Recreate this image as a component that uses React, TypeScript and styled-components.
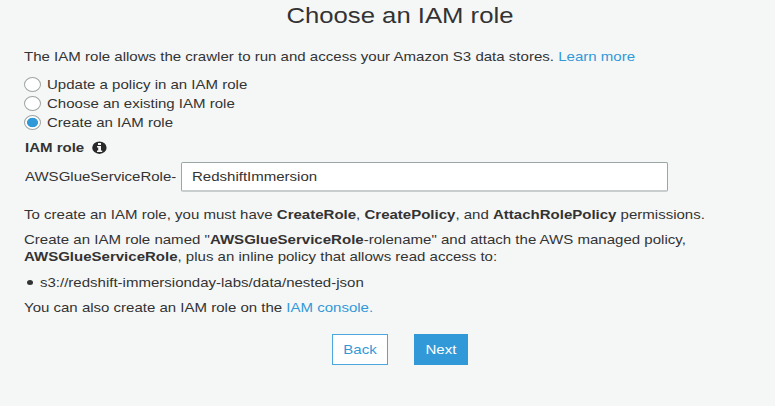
import React, { useState } from "react";
import styled, { createGlobalStyle } from "styled-components";

const GlobalStyle = createGlobalStyle`
  * { box-sizing: border-box; }
  html, body { margin: 0; background: #f5f7f7; }
  body {
    font-family: "Liberation Sans", Arial, sans-serif;
    font-size: 13.5px;
    line-height: 17px;
    color: #333;
    overflow: hidden;
  }
`;

const Page = styled.main`
  display: flex;
  flex-direction: column;
  height: 406px;
  padding: 2px 24px 0;
  background: #f5f7f7;
`;

const Wide = styled.span<{ $stretch?: number; $center?: boolean }>`
  display: inline-block;
  white-space: nowrap;
  transform: scaleX(${(p) => p.$stretch ?? 1.112});
  transform-origin: ${(p) => (p.$center ? "center" : "left")} center;
`;

const Title = styled.h1`
  margin: 0 0 18px;
  padding-left: 24px;
  height: 28px;
  line-height: 28px;
  font-size: 22.4px;
  font-weight: 400;
  text-align: center;
`;

const Paragraph = styled.p<{ $gap?: number }>`
  display: flex;
  flex-direction: column;
  align-items: flex-start;
  margin: 0 0 ${(p) => p.$gap ?? 8}px;
`;

const Link = styled.a`
  color: #3299d9;
  text-decoration: none;
`;

const Options = styled.div`
  display: flex;
  flex-direction: column;
  margin: 10px 0 7px;
`;

const Option = styled.label`
  display: flex;
  align-items: center;
  gap: 6px;
  height: 19px;
`;

const Radio = styled.input`
  appearance: none;
  flex: none;
  width: 17px;
  height: 15px;
  margin: 0;
  border: 1px solid #9fa3a3;
  border-radius: 50%;
  background: #fff;
  &:checked {
    background: radial-gradient(ellipse 5.8px 5.1px at center, #3299d9 88%, #fff 100%);
  }
`;

const FieldLabel = styled.div`
  display: flex;
  align-items: center;
  height: 17px;
  margin-bottom: 6px;
  padding-left: 1px;
  font-weight: 700;
`;

const LabelText = styled.span`
  width: 67px;
`;

const Field = styled.div`
  display: flex;
  align-items: center;
  height: 30px;
  margin-bottom: 14px;
  padding-left: 1px;
`;

const Prefix = styled.span`
  width: 156px;
  padding-bottom: 2px;
`;

const InputBox = styled.div`
  display: flex;
  align-items: center;
  width: 487px;
  height: 30px;
  padding-left: 10px;
  border: 1px solid #9ba7a7;
  border-bottom: 2px solid #c8cece;
  border-radius: 2px;
  background: #fff;
`;

const List = styled.ul`
  margin: 1px 0 8px;
  padding: 0;
  list-style: none;
`;

const Item = styled.li`
  display: flex;
  align-items: center;
  gap: 7px;
  padding-left: 3px;
  &::before {
    content: "";
    width: 6px;
    height: 5px;
    border-radius: 50%;
    background: #333;
  }
`;

const Actions = styled.div`
  display: flex;
  gap: 26px;
  margin-top: 10px;
  padding-left: 308px;
`;

const Button = styled.button<{ $primary?: boolean }>`
  width: ${(p) => (p.$primary ? 54 : 56)}px;
  height: 31px;
  padding: 0;
  border: 1px solid ${(p) => (p.$primary ? "#3299d9" : "#4ba7de")};
  background: ${(p) => (p.$primary ? "#3299d9" : "#fff")};
  color: ${(p) => (p.$primary ? "#fff" : "#3299d9")};
  font: inherit;
`;

const InfoIcon = () => (
  <svg width="15" height="13" viewBox="0 0 15 13" aria-label="Info">
    <ellipse cx="7.4" cy="6.7" rx="7.2" ry="6.2" fill="#292929" />
    <path d="M6 2h3v2H6zM5 5.1h4v4.3h1.2V11H5V9.4h1.2V6.6H5z" fill="#f5f7f7" />
  </svg>
);

const choices = [
  "Update a policy in an IAM role",
  "Choose an existing IAM role",
  "Create an IAM role",
];

export default function App() {
  const [selected, setSelected] = useState(2);
  return (
    <>
      <GlobalStyle />
      <Page>
        <Title>
          <Wide $center $stretch={1.147}>Choose an IAM role</Wide>
        </Title>
        <Paragraph $gap={0}>
          <Wide $stretch={1.114}>
            The IAM role allows the crawler to run and access your Amazon S3 data stores.{" "}
            <Link>Learn more</Link>
          </Wide>
        </Paragraph>
        <Options>
          {choices.map((text, i) => (
            <Option key={text}>
              <Radio type="radio" name="role" checked={selected === i} onChange={() => setSelected(i)} />
              <Wide>{text}</Wide>
            </Option>
          ))}
        </Options>
        <FieldLabel>
          <LabelText>
            <Wide>IAM role</Wide>
          </LabelText>
          <InfoIcon />
        </FieldLabel>
        <Field>
          <Prefix>
            <Wide>AWSGlueServiceRole-</Wide>
          </Prefix>
          <InputBox>
            <Wide>RedshiftImmersion</Wide>
          </InputBox>
        </Field>
        <Paragraph>
          <Wide>
            To create an IAM role, you must have <b>CreateRole</b>, <b>CreatePolicy</b>, and{" "}
            <b>AttachRolePolicy</b> permissions.
          </Wide>
        </Paragraph>
        <Paragraph>
          <Wide $stretch={1.114}>
            Create an IAM role named "<b>AWSGlueServiceRole</b>-rolename" and attach the AWS managed policy,
          </Wide>
          <Wide>
            <b>AWSGlueServiceRole</b>, plus an inline policy that allows read access to:
          </Wide>
        </Paragraph>
        <List>
          <Item>
            <Wide>s3://redshift-immersionday-labs/data/nested-json</Wide>
          </Item>
        </List>
        <Paragraph>
          <Wide>
            You can also create an IAM role on the <Link>IAM console.</Link>
          </Wide>
        </Paragraph>
        <Actions>
          <Button>
            <Wide $center>Back</Wide>
          </Button>
          <Button $primary>
            <Wide $center>Next</Wide>
          </Button>
        </Actions>
      </Page>
    </>
  );
}
